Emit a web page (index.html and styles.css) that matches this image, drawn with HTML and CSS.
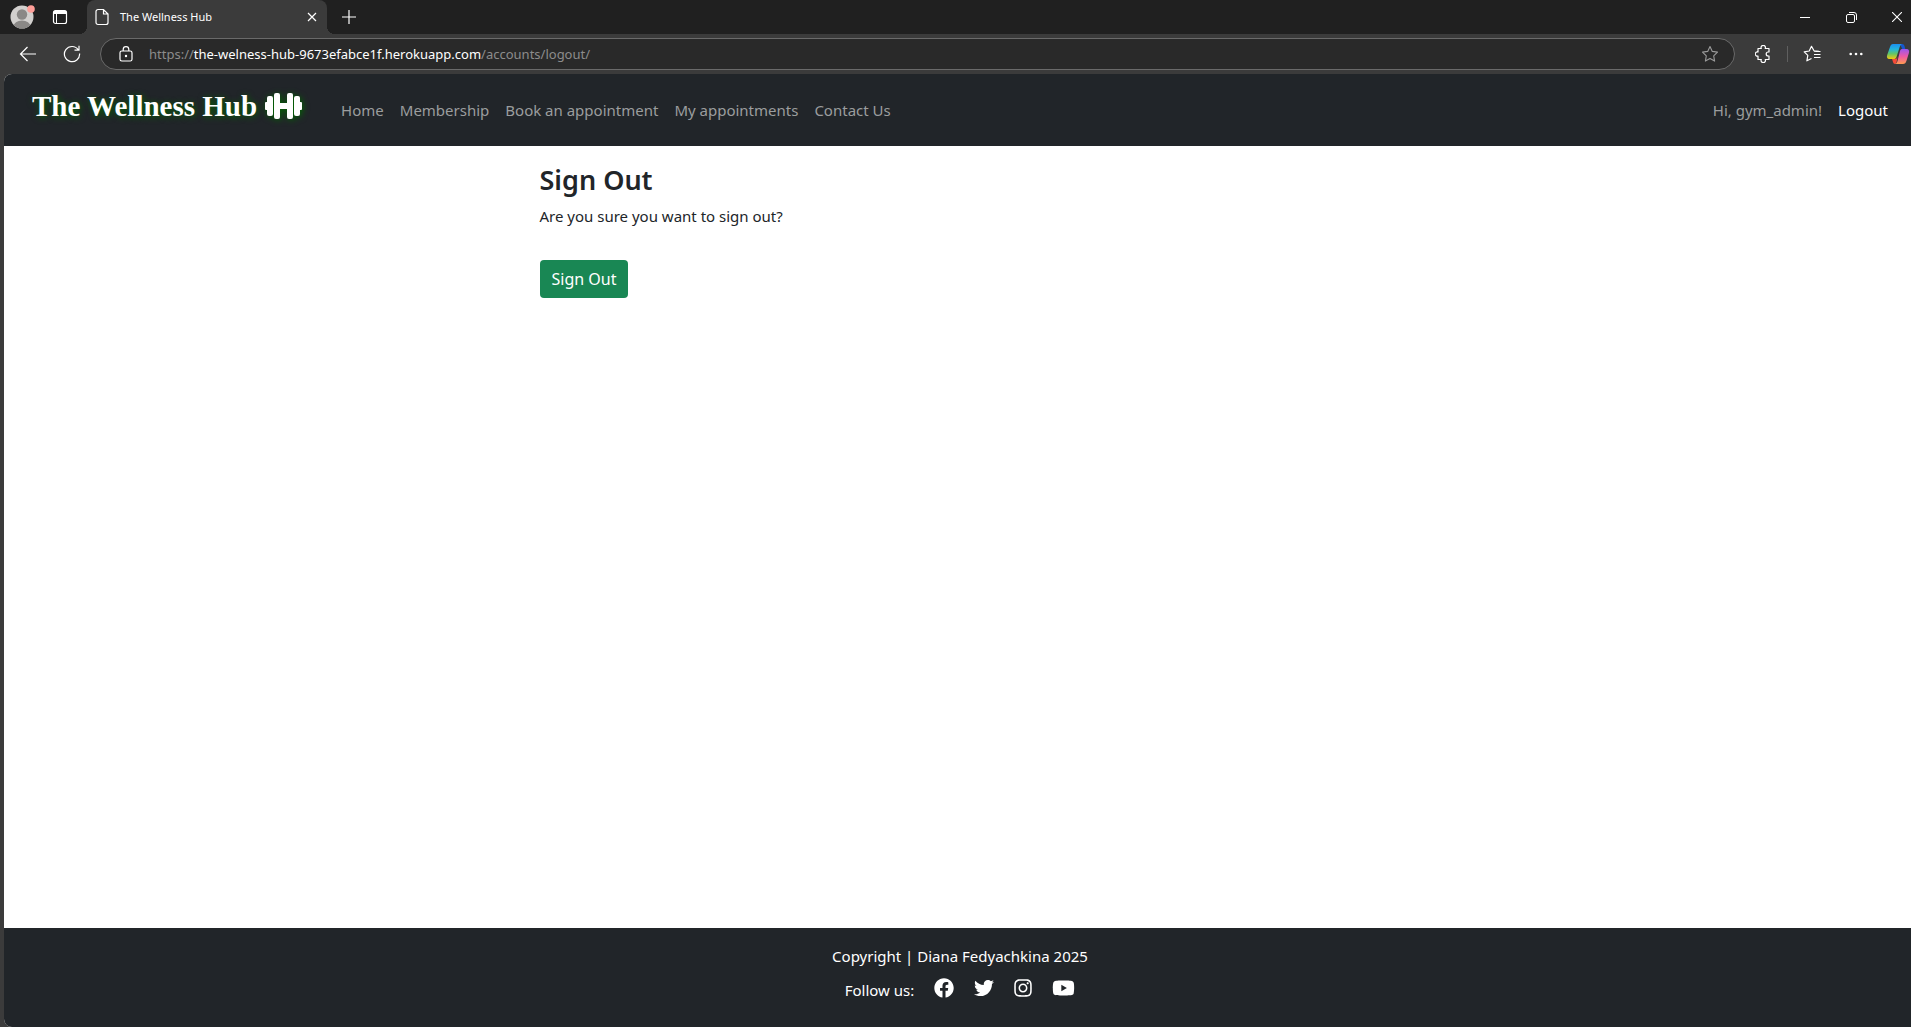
FILE: index.html
```html
<!DOCTYPE html>
<html lang="en">
<head>
<meta charset="utf-8">
<meta name="viewport" content="width=device-width, initial-scale=1">
<title>The Wellness Hub</title>
<link rel="stylesheet" href="styles.css">
</head>
<body>
<div class="browser">
  <div class="titlebar">
    <button class="icon-btn profile" aria-label="Profile">
      <svg width="26" height="26" viewBox="0 0 26 26"><defs><clipPath id="face"><circle cx="13" cy="13" r="11.5"/></clipPath></defs><circle cx="13" cy="13" r="11.5" fill="#d2d0ce"/><g clip-path="url(#face)" fill="#8a8886"><circle cx="13" cy="10.5" r="5.2"/><ellipse cx="13" cy="22.5" rx="8.5" ry="6"/></g><circle cx="22" cy="5" r="3.8" fill="#ff9e98"/></svg>
    </button>
    <button class="icon-btn workspaces" aria-label="Tab actions">
      <svg width="16" height="16" viewBox="0 0 16 16"><rect x="1.5" y="1.5" width="13" height="13" rx="2" fill="none" stroke="#fff" stroke-width="1.2"/><path d="M1.5 3.5a2 2 0 0 1 2-2h9a2 2 0 0 1 2 2V5h-13z" fill="#fff"/><path d="M4.5 5v9.500" stroke="#fff"/></svg>
    </button>
    <div class="tab">
      <svg width="16" height="18" viewBox="0 0 16 18" fill="none" stroke="#fff" stroke-width="1.2"><path d="M4 1.500h5.500l4.500 4.500v8.500a2 2 0 0 1-2 2H4a2 2 0 0 1-2-2v-11a2 2 0 0 1 2-2zM9.500 1.500V6H14"/></svg>
      <span class="tab-title">The Wellness Hub</span>
      <button class="icon-btn tab-close" aria-label="Close tab"><svg width="10" height="10" viewBox="0 0 10 10" stroke="#fff" stroke-width="1.200"><path d="M1 1l8 8M9 1l-8 8"/></svg></button>
    </div>
    <button class="icon-btn new-tab" aria-label="New tab"><svg width="14" height="14" viewBox="0 0 14 14" stroke="#fff" stroke-width="1.2"><path d="M7 0v14M0 7h14"/></svg></button>
    <div class="window-controls">
      <button class="icon-btn" aria-label="Minimize"><svg width="10" height="10" viewBox="0 0 10 10"><path d="M0 5.500h10" stroke="#fff"/></svg></button>
      <button class="icon-btn" aria-label="Restore"><svg width="11" height="11" viewBox="0 0 11 11" fill="none" stroke="#fff"><rect x=".5" y="2.500" width="8" height="8" rx="1.500"/><path d="M3 .5h5a2.500 2.500 0 0 1 2.500 2.500v5"/></svg></button>
      <button class="icon-btn" aria-label="Close"><svg width="10" height="10" viewBox="0 0 10 10" stroke="#fff" stroke-width="1.100"><path d="M0 0l10 10M10 0L0 10"/></svg></button>
    </div>
  </div>

  <div class="toolbar">
    <button class="icon-btn nav-btn" aria-label="Back"><svg width="18" height="16" viewBox="0 0 18 16" fill="none" stroke="#fff" stroke-width="1.200"><path d="M17 8H1.500M8.500 1l-7 7 7 7"/></svg></button>
    <button class="icon-btn nav-btn" aria-label="Reload"><svg width="18" height="18" viewBox="0 0 18 18" fill="none" stroke="#fff" stroke-width="1.200"><path d="M16.600 8.500A7.600 7.600 0 1 1 15.300 4.800M16 .8v4.400h-4.500"/></svg></button>
    <div class="address">
      <svg width="14" height="16" viewBox="0 0 14 16" fill="none" stroke="#fff" stroke-width="1.200"><rect x="1" y="5" width="12" height="10" rx="1.800"/><path d="M4.200 5V3.500a2.800 2.800 0 0 1 5.600 0V5"/><circle cx="7" cy="10" r=".6" fill="#fff"/></svg>
      <div class="url" role="textbox" aria-label="Address">https://<span class="host">the-welness-hub-9673efabce1f.herokuapp.com</span>/accounts/logout/</div>
      <button class="icon-btn" aria-label="Add to favorites"><svg width="18" height="18" viewBox="0 0 18 18" fill="none" stroke="#9a9a9a" stroke-width="1.100" stroke-linejoin="round"><path d="M9 1.500l2.300 4.900 5.200.7-3.800 3.700.9 5.300L9 13.600l-4.600 2.500.9-5.300L1.500 7.100l5.200-.7z"/></svg></button>
    </div>
    <div class="tools">
      <button class="icon-btn" aria-label="Extensions"><svg width="16" height="18" viewBox="0 0 16 18" fill="none" stroke="#fff" stroke-width="1.200" stroke-linejoin="round"><path d="M5 3.500h1.300a2.200 2.200 0 1 1 3.900 0H14V7h-.8a2 2 0 1 0 0 4h.8v3.500h-3.800a2.200 2.200 0 1 1-3.900 0H3V11a2.100 2.100 0 1 1 0-4V3.500z"/></svg></button>
      <span class="divider"></span>
      <button class="icon-btn" aria-label="Favorites"><svg width="18" height="18" viewBox="0 0 18 18" fill="none" stroke="#fff" stroke-width="1.200" stroke-linejoin="round"><path d="M16 6.400l-5-.6L8.500 1.300 6.200 6l-5 .8 3.600 3.600-.9 5.400 4.600-2.300M11 9.500h6.500M11 12.500h6.500M11 6.500h6.500"/></svg></button>
      <button class="icon-btn" aria-label="Settings and more"><svg width="14" height="4" viewBox="0 0 14 4" fill="#fff"><circle cx="1.700" cy="2" r="1.300"/><circle cx="7" cy="2" r="1.300"/><circle cx="12.300" cy="2" r="1.300"/></svg></button>
      <button class="icon-btn" aria-label="Copilot"><svg width="24" height="22" viewBox="0 0 24 22"><defs><linearGradient id="ca" x1="0" y1="0" x2="0" y2="1"><stop offset="0" stop-color="#1b8ff0"/><stop offset=".35" stop-color="#24b5dc"/><stop offset=".65" stop-color="#62c665"/><stop offset="1" stop-color="#f5c80e"/></linearGradient><linearGradient id="cb" x1="0" y1="0" x2="0" y2="1"><stop offset="0" stop-color="#9a55ee"/><stop offset=".5" stop-color="#ee5aa4"/><stop offset="1" stop-color="#ff9a50"/></linearGradient></defs><path d="M14 1h2c1.500 0 2 .7 2.500 2l.8 3h-3z" fill="#1557ce"/><path d="M7 1h9c-1.500.5-2 2-2.500 3.500L10.500 14c-.5 1.500-1.300 2-3 2H3.500C1 16 .5 14 1.200 12L4 4c.6-2 1.500-3 3-3z" fill="url(#ca)"/><path d="M6 16h3c1.500 0 2-.8 2.500-2l-.8 4.500c-.3 1.500-.7 2.500-1.700 2.500-2 0-2-3-3-5z" fill="#f64b38"/><path d="M16.500 6H20.500c2.500 0 3 2 2.400 4L20.400 18c-.6 2-1.500 3-3.400 3H9c1.500-.5 2-1.500 2.500-3L14 8c.5-1.500 1.200-2 2.500-2z" fill="url(#cb)"/></svg></button>
    </div>
  </div>

  <div class="page">
    <header class="site-nav">
      <a class="brand" href="#">The Wellness Hub
        <svg width="38" height="28" viewBox="0 0 38 28" fill="#fff"><rect x="0" y="10" width="4" height="8" rx="1"/><rect x="2" y="4" width="6" height="20" rx="2"/><rect x="9" y="1" width="6" height="26" rx="2"/><rect x="14" y="11" width="9" height="6"/><rect x="22" y="1" width="6" height="26" rx="2"/><rect x="29" y="4" width="6" height="20" rx="2"/><rect x="33" y="10" width="4" height="8" rx="1"/></svg>
      </a>
      <nav class="links">
        <a href="#">Home</a>
        <a href="#">Membership</a>
        <a href="#">Book an appointment</a>
        <a href="#">My appointments</a>
        <a href="#">Contact Us</a>
      </nav>
      <div class="account">
        <span>Hi, gym_admin!</span>
        <a class="active" href="#">Logout</a>
      </div>
    </header>

    <main class="content">
      <h1>Sign Out</h1>
      <p>Are you sure you want to sign out?</p>
      <form><button class="btn" type="button">Sign Out</button></form>
    </main>

    <footer class="site-footer">
      <p>Copyright | Diana Fedyachkina 2025</p>
      <div class="social">
        <span>Follow us:</span>
        <a href="#" aria-label="Facebook"><svg width="20" height="20" viewBox="0 0 512 512"><path d="M504 256C504 119 393 8 256 8S8 119 8 256c0 123.780 90.690 226.380 209.250 245V327.690h-63V256h63v-54.640c0-62.150 37-96.480 93.670-96.480 27.140 0 55.520 4.840 55.520 4.840v61h-31.280c-30.800 0-40.410 19.120-40.410 38.730V256h68.780l-11 71.690h-57.780V501C413.310 482.380 504 379.780 504 256z"/></svg></a>
        <a href="#" aria-label="Twitter"><svg width="20" height="20" viewBox="0 0 512 512"><path d="M459.370 151.716c.325 4.548.325 9.097.325 13.645 0 138.720-105.583 298.558-298.558 298.558-59.452 0-114.680-17.219-161.137-47.106 8.447.974 16.568 1.299 25.340 1.299 49.055 0 94.213-16.568 130.274-44.832-46.132-.975-84.792-31.188-98.112-72.772 6.498.974 12.995 1.624 19.818 1.624 9.421 0 18.843-1.300 27.614-3.573-48.081-9.747-84.143-51.980-84.143-102.985v-1.299c13.969 7.797 30.214 12.670 47.431 13.319-28.264-18.843-46.781-51.005-46.781-87.391 0-19.492 5.197-37.360 14.294-52.954 51.655 63.675 129.300 105.258 216.365 109.807-1.624-7.797-2.599-15.918-2.599-24.040 0-57.828 46.782-104.934 104.934-104.934 30.213 0 57.502 12.670 76.670 33.137 23.715-4.548 46.456-13.320 66.599-25.340-7.798 24.366-24.366 44.833-46.132 57.827 21.117-2.273 41.584-8.122 60.426-16.243-14.292 20.791-32.161 39.308-52.628 54.253z"/></svg></a>
        <a href="#" aria-label="Instagram"><svg width="18" height="20" viewBox="0 0 448 512"><path d="M224.100 141c-63.600 0-114.900 51.300-114.900 114.900s51.300 114.900 114.900 114.900S339 319.500 339 255.900 287.700 141 224.100 141zm0 189.600c-41.100 0-74.700-33.500-74.700-74.700s33.500-74.700 74.700-74.700 74.700 33.500 74.700 74.700-33.600 74.700-74.700 74.700zm146.400-194.300c0 14.900-12 26.800-26.800 26.800-14.900 0-26.800-12-26.800-26.800s12-26.800 26.800-26.800 26.800 12 26.800 26.800zm76.100 27.200c-1.700-35.900-9.900-67.700-36.200-93.900-26.200-26.200-58-34.400-93.900-36.200-37-2.100-147.900-2.100-184.900 0-35.800 1.700-67.600 9.900-93.900 36.100s-34.400 58-36.200 93.900c-2.100 37-2.100 147.900 0 184.900 1.700 35.900 9.900 67.700 36.200 93.900s58 34.400 93.900 36.200c37 2.100 147.900 2.100 184.900 0 35.900-1.700 67.700-9.900 93.900-36.200 26.200-26.200 34.400-58 36.200-93.900 2.100-37 2.100-147.800 0-184.800zM398.800 388c-7.800 19.600-22.900 34.700-42.600 42.600-29.500 11.700-99.500 9-132.100 9s-102.700 2.600-132.100-9c-19.600-7.800-34.700-22.900-42.600-42.600-11.700-29.500-9-99.500-9-132.100s-2.600-102.700 9-132.100c7.800-19.600 22.900-34.700 42.600-42.600 29.500-11.700 99.500-9 132.100-9s102.700-2.600 132.100 9c19.600 7.800 34.700 22.900 42.600 42.600 11.700 29.500 9 99.500 9 132.100s2.700 102.700-9 132.100z"/></svg></a>
        <a href="#" aria-label="YouTube"><svg width="23" height="20" viewBox="0 0 576 512"><path d="M549.655 124.083c-6.281-23.650-24.787-42.276-48.284-48.597C458.781 64 288 64 288 64S117.220 64 74.629 75.486c-23.497 6.322-42.003 24.947-48.284 48.597-11.412 42.867-11.412 132.305-11.412 132.305s0 89.438 11.412 132.305c6.281 23.650 24.787 41.500 48.284 47.821C117.220 448 288 448 288 448s170.780 0 213.371-11.486c23.497-6.321 42.003-24.171 48.284-47.821 11.412-42.867 11.412-132.305 11.412-132.305s0-89.438-11.412-132.305zm-317.510 213.508V175.185l142.739 81.205-142.739 81.201z"/></svg></a>
      </div>
    </footer>
  </div>
</div>
</body>
</html>
```
FILE: styles.css
```css
* { box-sizing: border-box; }

body {
  margin: 0;
  background: #3b3b3b;
  font-family: "Noto Sans", "Open Sans", sans-serif;
  font-size: 15px;
  line-height: 24px;
  color: #212529;
}

h1, p { margin: 0; }
a { color: inherit; text-decoration: none; }
button { font: inherit; }
svg { display: block; flex: none; }

.icon-btn {
  display: flex;
  align-items: center;
  justify-content: center;
  padding: 0;
  border: 0;
  background: none;
}

.browser {
  display: flex;
  flex-direction: column;
  min-height: 100vh;
}

/* Tab strip */
.titlebar {
  display: flex;
  height: 34px;
  background: #202020;
  color: #fff;
}

.profile { width: 44px; }
.workspaces { width: 32px; }

.tab {
  position: relative;
  display: flex;
  align-items: center;
  gap: 10px;
  width: 240px;
  margin-left: 11px;
  padding: 0 7px;
  border-radius: 8px 8px 0 0;
  background: #3b3b3b;
  font-size: 11px;
}

.tab::before,
.tab::after {
  content: "";
  position: absolute;
  bottom: 0;
  width: 8px;
  height: 8px;
}

.tab::before {
  right: 100%;
  background: radial-gradient(circle at 0 0, #202020 8px, #3b3b3b 8px);
}

.tab::after {
  left: 100%;
  background: radial-gradient(circle at 100% 0, #202020 8px, #3b3b3b 8px);
}

.tab-title { flex: 1; }
.tab-close { width: 16px; height: 16px; }
.new-tab { width: 43px; }

.window-controls {
  display: flex;
  margin-left: auto;
}

.window-controls .icon-btn { width: 46px; }
.window-controls .icon-btn:last-child {
  justify-content: flex-end;
  width: 37px;
  padding-right: 9px;
}

/* Address row */
.toolbar {
  display: flex;
  align-items: center;
  height: 40px;
  padding-left: 6px;
}

.nav-btn { width: 44px; height: 32px; }

.address {
  display: flex;
  flex: 1;
  align-items: center;
  height: 32px;
  margin-left: 6px;
  padding: 0 15px 0 18px;
  border: 1px solid #6a6a6a;
  border-radius: 16px;
  background: #292929;
}

.url {
  flex: 1;
  padding-left: 16px;
  font-size: 13px;
  color: #8c8c8c;
}

.host { color: #fff; }

.tools {
  display: flex;
  align-items: center;
  padding-left: 4px;
}

.tools .icon-btn { width: 48px; height: 32px; }
.tools .icon-btn:nth-of-type(3) { width: 40px; }
.tools .icon-btn:last-child {
  justify-content: flex-end;
  width: 35px;
  padding-right: 1px;
}
.divider { width: 1px; height: 16px; background: #5f5f5f; }

/* Site */
.page {
  display: flex;
  flex: 1;
  flex-direction: column;
  margin-left: 4px;
  overflow: hidden;
  border-radius: 8px 0 0 8px;
  background: #fff;
}

.site-nav {
  display: flex;
  align-items: center;
  min-height: 72px;
  padding: 0 23px 0 28px;
  background: #212529;
  color: #9b9d9e;
}

.brand {
  display: flex;
  align-items: center;
  gap: 8px;
  padding-bottom: 8px;
  font-family: "Liberation Serif", serif;
  font-size: 29px;
  font-weight: 700;
  color: #fff;
  text-shadow: 1px 1px 6px #006400;
}

.brand svg { overflow: visible; filter: drop-shadow(1px 1px 3px #006400); }

.links, .account { display: flex; gap: 16px; }
.links { margin-left: 38px; }
.account { margin-left: auto; }
.active { color: #fff; }

.content {
  flex: 1;
  width: 100%;
  max-width: 836px;
  margin: 0 auto;
  padding: 16px 0;
}

.content h1 {
  margin-bottom: 6px;
  font-size: 27px;
  font-weight: 600;
  line-height: 36px;
}

.content p { margin-bottom: 32px; }

.btn {
  height: 38px;
  padding: 0 12px;
  border: 0;
  border-radius: 4px;
  background: #198754;
  font-size: 16px;
  color: #fff;
}

.site-footer {
  display: flex;
  flex-direction: column;
  align-items: center;
  gap: 10px;
  min-height: 99px;
  padding: 16px 0 16px 5px;
  background: #212529;
  color: #fff;
}

.social {
  display: flex;
  align-items: center;
  gap: 20px;
}

.social svg { fill: #fff; }
.social a { padding-bottom: 4px; }
```
